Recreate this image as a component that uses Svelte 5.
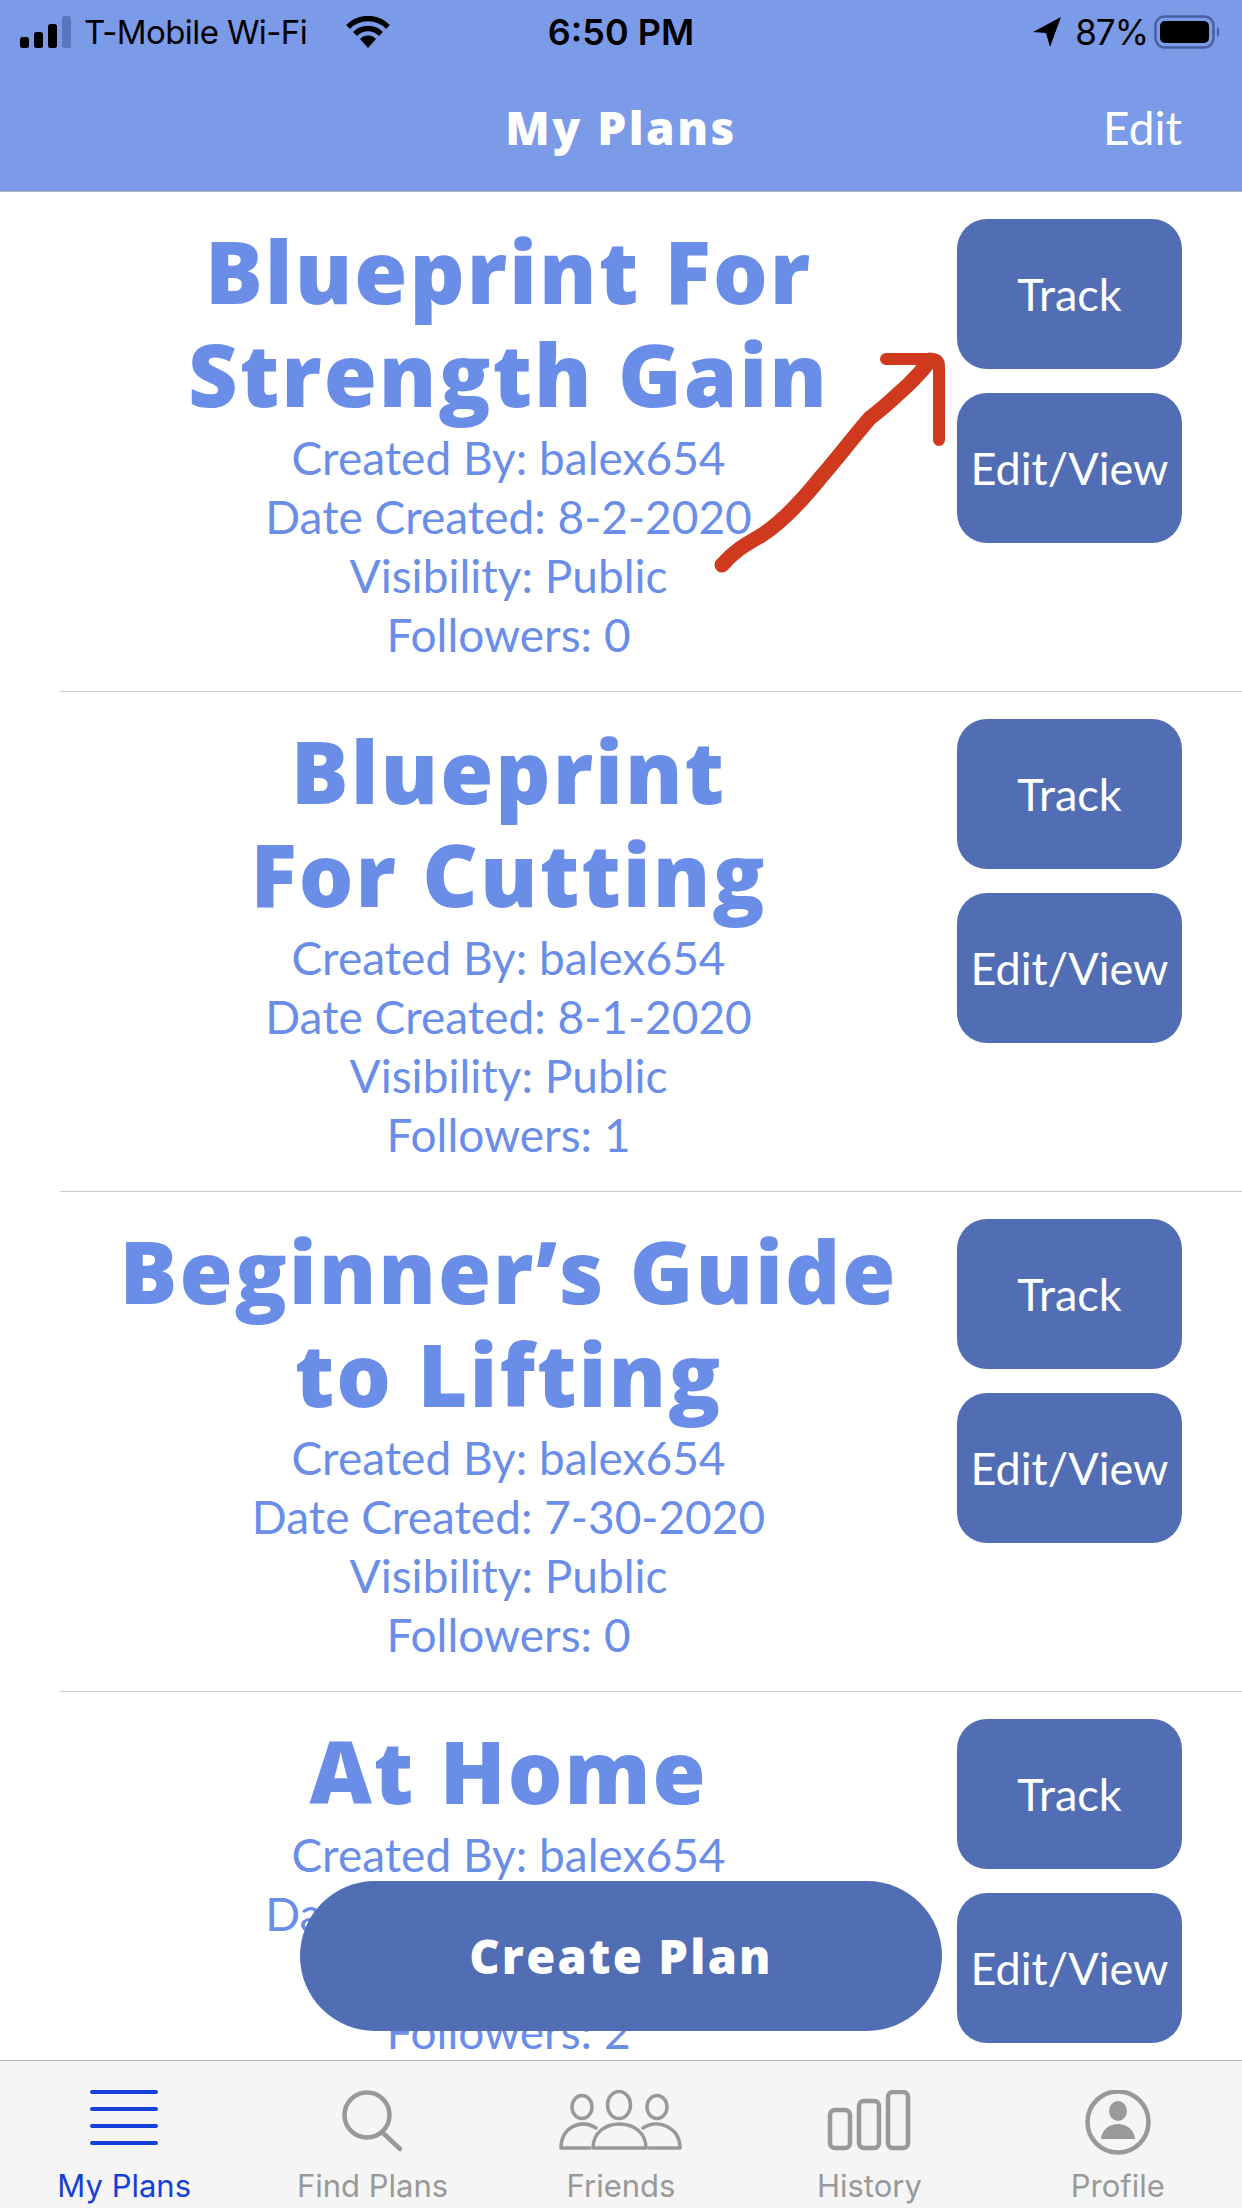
<script>
  const plans = [
    { title: ['Blueprint For', 'Strength Gain'], date: '8-2-2020', followers: 0 },
    { title: ['Blueprint', 'For Cutting'], date: '8-1-2020', followers: 1 },
    { title: ['Beginner’s Guide', 'to Lifting'], date: '7-30-2020', followers: 0 },
    { title: ['At Home'], date: '7-5-2020', followers: 2 },
  ]
</script>

<main class="page">
  <header class="top">
    <div class="status">
      <div class="status-left">
        <svg class="signal" width="52" height="32" viewBox="0 0 52 32">
          <rect x="0" y="21" width="9" height="11" rx="2.5" fill="#000" />
          <rect x="14" y="16" width="9" height="16" rx="2.5" fill="#000" />
          <rect x="28" y="8" width="9" height="24" rx="2.5" fill="#000" />
          <rect x="42" y="0" width="9" height="32" rx="2.5" fill="#5a75bd" />
        </svg>
        <span class="carrier">T-Mobile Wi-Fi</span>
        <svg class="wifi" width="44" height="32" viewBox="0 0 44 32">
          <path d="M2 11 A28 28 0 0 1 42 11" fill="none" stroke="#000" stroke-width="5.5" />
          <path d="M9 18 A18 18 0 0 1 35 18" fill="none" stroke="#000" stroke-width="5.5" />
          <path d="M14 23 A11 11 0 0 1 30 23 L22 32 Z" fill="#000" />
        </svg>
      </div>
      <span class="time">6:50 PM</span>
      <div class="status-right">
        <svg width="28" height="30" viewBox="0 0 28 30">
          <path d="M28 0 L0 15 L13 16 L17 30 Z" fill="#000" />
        </svg>
        <span class="pct">87%</span>
        <svg width="68" height="34" viewBox="0 0 68 34">
          <rect x="1.5" y="1.5" width="58" height="31" rx="9" fill="none" stroke="#4a5f9e" stroke-width="2.5" />
          <rect x="6" y="6" width="49" height="22" rx="5" fill="#000" />
          <path d="M63 12 C66 13 66 21 63 22 Z" fill="#4a5f9e" />
        </svg>
      </div>
    </div>
    <div class="navbar">
      <span class="nav-title">My Plans</span>
      <span class="nav-edit">Edit</span>
    </div>
  </header>

  <section class="list">
    {#each plans as plan}
      <div class="row">
        <div class="info">
          <div class="title">
            {#each plan.title as line}
              <div class="title-line">{line}</div>
            {/each}
          </div>
          <div class="meta">Created By: balex654</div>
          <div class="meta">Date Created: {plan.date}</div>
          <div class="meta">Visibility: Public</div>
          <div class="meta">Followers: {plan.followers}</div>
        </div>
        <div class="actions">
          <button class="action">Track</button>
          <button class="action">Edit/View</button>
        </div>
      </div>
    {/each}
  </section>

  <button class="create">Create Plan</button>

  <svg class="scribble" width="1242" height="600" viewBox="0 0 1242 600">
    <path d="M722 565 C735 550 745 545 762 535 C785 520 805 497 821 477 C840 455 855 435 870 418 C885 407 897 395 908 385 C918 375 925 368 930 360" fill="none" stroke="#cf3a1f" stroke-width="15" stroke-linecap="round" stroke-linejoin="round" />
    <path d="M886 359 L932 359 Q939 359 939 366 L939 440" fill="none" stroke="#cf3a1f" stroke-width="12" stroke-linecap="round" stroke-linejoin="round" />
  </svg>

  <nav class="tabs">
    <div class="tab active">
      <svg class="tab-icon" width="70" height="66" viewBox="0 0 70 66">
        <g stroke="#1540d8" stroke-width="4" stroke-linecap="round">
          <line x1="3" y1="2" x2="67" y2="2" />
          <line x1="3" y1="19" x2="67" y2="19" />
          <line x1="3" y1="36" x2="67" y2="36" />
          <line x1="3" y1="53" x2="67" y2="53" />
        </g>
      </svg>
      <span>My Plans</span>
    </div>
    <div class="tab">
      <svg class="tab-icon" width="70" height="66" viewBox="0 0 70 66">
        <g fill="none" stroke="#999" stroke-width="4.5" stroke-linecap="round">
          <circle cx="29" cy="25" r="22.5" />
          <line x1="44" y1="42" x2="62" y2="59" />
        </g>
      </svg>
      <span>Find Plans</span>
    </div>
    <div class="tab">
      <svg class="tab-icon" width="126" height="66" viewBox="0 0 126 66">
        <g fill="none" stroke="#999" stroke-width="3.5" stroke-linejoin="round" stroke-linecap="round">
          <ellipse cx="24" cy="17" rx="10" ry="11.5" />
          <ellipse cx="61" cy="15" rx="11.5" ry="13.5" />
          <ellipse cx="99" cy="17" rx="10" ry="11.5" />
          <path d="M38 38 C22 28 3 38 3 58 L32 58" />
          <path d="M85 38 C101 28 122 38 122 58 L91 58" />
          <path d="M35 58 C35 26 88 26 88 58 Z" />
        </g>
      </svg>
      <span>Friends</span>
    </div>
    <div class="tab">
      <svg class="tab-icon" width="84" height="66" viewBox="0 0 84 66">
        <g fill="none" stroke="#999" stroke-width="4.5">
          <rect x="3" y="20" width="20" height="38" rx="5" />
          <rect x="32" y="11" width="20" height="47" rx="5" />
          <rect x="61" y="2" width="20" height="56" rx="5" />
        </g>
      </svg>
      <span>History</span>
    </div>
    <div class="tab">
      <svg class="tab-icon" width="70" height="66" viewBox="0 0 70 66">
        <circle cx="35" cy="32" r="30.5" fill="none" stroke="#999" stroke-width="4.5" />
        <ellipse cx="35" cy="21" rx="9" ry="10" fill="#999" />
        <path d="M18 49 C20 29 50 29 52 49 Z" fill="#999" />
      </svg>
      <span>Profile</span>
    </div>
  </nav>
</main>

<style>
  :global(body) {
    margin: 0;
  }
  .page {
    position: relative;
    width: 1242px;
    height: 2208px;
    overflow: hidden;
    display: flex;
    flex-direction: column;
    background: #fff;
    font-family: Lato, "Liberation Sans", sans-serif;
  }
  .top {
    height: 191px;
    background: #7b9be8;
    border-bottom: 1px solid #b0b0b0;
    flex: none;
  }
  .status {
    display: grid;
    grid-template-columns: 1fr auto 1fr;
    align-items: center;
    height: 32px;
    padding: 10px 20px 0 20px;
    font-family: Inter, Roboto, sans-serif;
    font-size: 33px;
    color: #000;
  }
  .status-left, .status-right {
    display: flex;
    align-items: center;
  }
  .status-right {
    justify-content: flex-end;
  }
  .carrier {
    margin-left: 12px;
    margin-right: 39px;
    letter-spacing: -0.6px;
    white-space: nowrap;
  }
  .time {
    font-size: 36px;
    font-weight: 600;
    white-space: nowrap;
  }
  .pct {
    font-size: 35px;
    margin-left: 14px;
    margin-right: 6px;
    letter-spacing: -1px;
  }
  .navbar {
    position: relative;
    display: flex;
    justify-content: center;
    align-items: center;
    height: 58px;
    margin-top: 56px;
    color: #fff;
    font-size: 46px;
  }
  .nav-title {
    font-family: "Open Sans", sans-serif;
    font-weight: 800;
    font-size: 46px;
    letter-spacing: 2.5px;
  }
  .nav-edit {
    position: absolute;
    right: 60px;
  }
  .list {
    flex: 1;
    overflow: hidden;
  }
  .row {
    display: flex;
    margin-left: 60px;
    height: 499px;
    border-bottom: 1px solid #ccc;
  }
  .row:last-child {
    border-bottom: none;
  }
  .info {
    flex: 1;
    text-align: center;
    color: #6a8ee8;
    padding-top: 27px;
  }
  .title {
    font-family: "Open Sans", sans-serif;
    font-size: 86px;
    font-weight: 800;
    letter-spacing: 2px;
    line-height: 103px;
    margin-bottom: 3px;
    white-space: nowrap;
  }
  .meta {
    font-size: 46px;
    line-height: 59px;
    white-space: nowrap;
  }
  .actions {
    display: flex;
    flex-direction: column;
    gap: 24px;
    width: 225px;
    margin: 27px 60px 0 0;
    flex: none;
  }
  .action {
    height: 150px;
    border: none;
    border-radius: 30px;
    background: #516eb5;
    color: #fff;
    font-family: inherit;
    font-size: 45px;
    padding: 0;
    white-space: nowrap;
  }
  .create {
    position: absolute;
    left: 300px;
    top: 1881px;
    width: 642px;
    height: 150px;
    border: none;
    border-radius: 75px;
    background: #516eb5;
    color: #fff;
    font-family: "Open Sans", sans-serif;
    font-size: 47px;
    font-weight: 800;
    letter-spacing: 2.2px;
  }
  .scribble {
    position: absolute;
    left: 0;
    top: 0;
    pointer-events: none;
  }
  .tabs {
    flex: none;
    height: 147px;
    display: grid;
    grid-template-columns: repeat(5, 1fr);
    background: #f5f5f5;
    border-top: 1px solid #b0b0b0;
    font-family: Inter, Roboto, sans-serif;
    font-size: 31px;
    color: #999;
  }
  .tab {
    display: flex;
    flex-direction: column;
    align-items: center;
  }
  .tab-icon {
    margin-top: 29px;
    margin-bottom: 11px;
  }
  .tab.active {
    color: #1540d8;
  }
</style>
